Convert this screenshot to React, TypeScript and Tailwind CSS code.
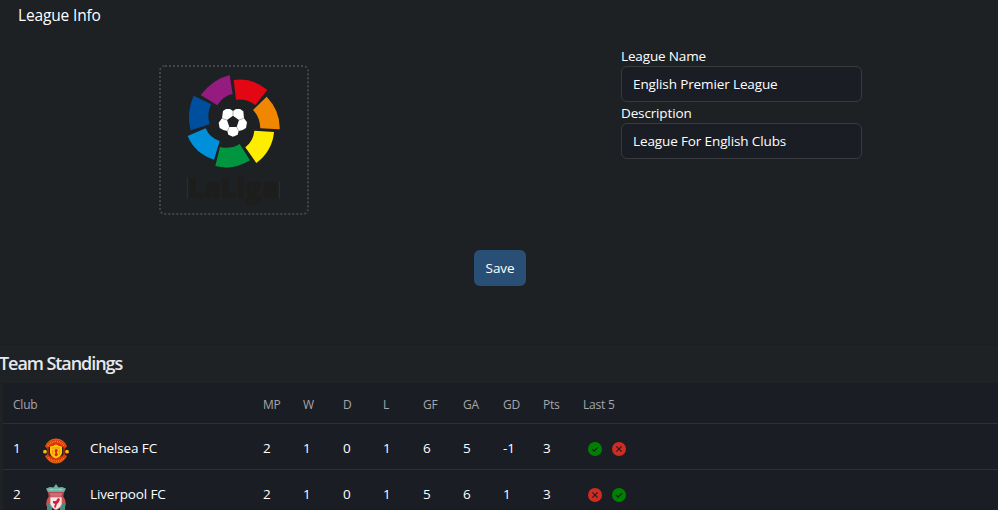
import React from "react";

const segments = [
  { fill: "#951b81", d: "M152 120 Q190 72 239 60 L248 117 Q220 122 202 151 Z" },
  { fill: "#e30613", d: "M251 75 Q306 66 352 105 L316 150 Q292 130 258 134 Z" },
  { fill: "#f18700", d: "M350 125 Q391 168 389 223 L331 220 Q330 187 309 165 Z" },
  { fill: "#ffed00", d: "M372 231 Q367 288 319 324 L286 277 Q310 258 313 227 Z" },
  { fill: "#009640", d: "M300 316 Q250 347 196 333 L210 276 Q241 284 269 267 Z" },
  { fill: "#0090d9", d: "M192 314 Q134 295 113 243 L167 220 Q178 248 209 258 Z" },
  { fill: "#004f9f", d: "M122 226 Q108 173 131 122 L183 148 Q169 178 179 208 Z" },
];

function LeagueLogo() {
  return (
    <svg viewBox="33 36 438 438" className="block h-full w-full">
      {segments.map((s) => (
        <path key={s.fill} d={s.d} fill={s.fill} />
      ))}
      <g fill="#fff">
        <path d="M219 168 L228 162 H240 L249 168 L258 162 H270 L280 169 L282 190 L291 202 L288 219 L278 225 L266 228 L263 239 L249 245 L235 239 L232 228 L220 225 L209 219 L206 203 L216 190 Z" />
      </g>
      <path d="M249 182 L267 195 L260 216 H238 L231 195 Z" fill="#1d2124" />
      <path d="M249 168 V182 M267 195 L281 190 M260 216 L266 228 M238 216 L232 228 M231 195 L216 190" stroke="#8c8e90" strokeWidth="2" />
      <text x="114" y="430" textLength="272" lengthAdjust="spacingAndGlyphs" fill="#1d1d1b" stroke="#1d1d1b" strokeWidth="2" className="font-['Open_Sans',sans-serif] text-[82px] font-extrabold">
        LaLiga
      </text>
      <path d="M112 368 V431 M389 380 V431" stroke="#34383a" strokeWidth="2" />
    </svg>
  );
}

function UnitedCrest() {
  return (
    <svg viewBox="0 0 26 26" className="block size-[26px]">
      <path d="M2 8.5 Q5 .8 13 .5 Q21 .8 24 8.5 L21.5 11 V16 L24 18 Q20 25.3 13 25.5 Q6 25.3 2 18 L4.5 16 V11 Z" fill="#e03010" />
      <path d="M2.8 8.5 Q5 1.5 13 1.2 Q21 1.5 23.2 8.5 M2.8 18 Q6 24.7 13 24.9 Q20 24.7 23.2 18" fill="none" stroke="#c98a10" strokeWidth=".7" />
      <path d="M4.8 8 Q8 3.5 13 3.3 Q18 3.5 21.2 8" fill="none" stroke="#f58a1a" strokeWidth="1.7" strokeDasharray="1 .8" />
      <path d="M5 19.5 Q8 22.8 13 23 Q18 22.8 21 19.5" fill="none" stroke="#f5841a" strokeWidth="1.7" strokeDasharray="1 .8" />
      <path d="M5.500 9.500 Q13 4.500 20.500 9.500 V17 Q13 22 5.500 17 Z" fill="#33201b" />
      <circle cx="2" cy="13.7" r="1.9" fill="#f4b80e" />
      <circle cx="24" cy="13.7" r="1.9" fill="#f4b80e" />
      <path d="M7 8.500 L10 7.800 L13 6.500 L16 7.800 L19 8.500 V15 Q18 19 13 20.500 Q8 19 7 15 Z" fill="#ffc800" />
      <path d="M9 10 H17 M9.7 12 V16.5 M16.3 12 V16.5" stroke="#ee811a" />
      <path d="M11.5 12 L13 11 L15 12 L13.8 14 L15 17 L13 18.5 L11.5 17 L12.4 15 Z" fill="#d32412" />
    </svg>
  );
}

function LiverpoolCrest() {
  return (
    <svg viewBox="0 0 26 34" className="block h-[34px] w-[26px]">
      <path d="M3 4.5 L7 3 L10.5 3.5 L13 0 L15.5 3.5 L19 3 L23 4.5 L21 8.5 H5 Z" fill="#68b3a3" />
      <path d="M6 5.5 H20 M9 4 V7 M17 4 V7" stroke="#a8d2c7" strokeWidth=".7" />
      <path d="M5 8 H21 L20 15 H6 Z" fill="#ba4654" />
      <path d="M7 10 H19 M8 12 H18" stroke="#dfa6ab" strokeWidth=".8" />
      <path d="M5.5 13 Q2.5 17 3.5 22 H7 L8 14 Z M20.5 13 Q23.5 17 22.5 22 H19 L18 14 Z" fill="#ce5246" />
      <path d="M4 20 H9 V29 H4 Z M17 20 H22 V29 H17 Z" fill="#438f80" />
      <path d="M7 13 H19 V20 Q18 24 13 26 Q8 24 7 20 Z" fill="#f5e7e8" stroke="#c55b65" strokeWidth=".7" />
      <path d="M10 17 L13 17 L15 14 L17 15 L16 18 L14 20 L12.5 24 L11 23 L12 20 L10 19 Z" fill="#cf2436" />
      <path d="M7 26 H19 V32 H7 Z" fill="#5aab98" />
    </svg>
  );
}

function Result({ win }: { win: boolean }) {
  return (
    <svg viewBox="0 0 14 14" className="block size-[14px]">
      <circle cx="7" cy="7" r="7" fill={win ? "#008000" : "#d02c23"} />
      <path d={win ? "M4 7.1 L6.2 9.2 L10 5.1" : "M4.3 4.3 L9.7 9.7 M9.7 4.3 L4.3 9.7"} fill="none" stroke="#1b1d25" strokeWidth="1.1" />
    </svg>
  );
}

const columns = ["MP", "W", "D", "L", "GF", "GA", "GD", "Pts"];
const teams = [
  { name: "Chelsea FC", crest: <UnitedCrest />, stats: [2, 1, 0, 1, 6, 5, -1, 3], last: [true, false] },
  { name: "Liverpool FC", crest: <LiverpoolCrest />, stats: [2, 1, 0, 1, 5, 6, 1, 3], last: [false, true] },
];

function Field({ label, value }: { label: string; value: string }) {
  return (
    <label className="block h-[57px]">
      <span className="block h-[19px] text-[13.5px] leading-[19px] tracking-[-0.14px]">{label}</span>
      <input readOnly value={value} className="block h-9 w-[241px] rounded-md border border-[#373a3e] bg-[#1b1d25] px-[11px] text-[13.5px] tracking-[-0.12px] outline-none" />
    </label>
  );
}

export default function App() {
  return (
    <main className="h-[510px] w-[998px] overflow-hidden bg-[#1e2224] font-['Open_Sans','Noto_Sans',sans-serif] text-white">
      <section className="h-[345px] border-b border-[#1c1f22] bg-[#1d2124]">
        <h1 className="h-[47px] pt-1 pl-[18px] text-[15.5px] leading-[23px] tracking-[-0.15px]">League Info</h1>
        <div className="flex h-[203px]">
          <div className="w-[621px] pt-[18px] pl-[159px]">
            <div className="size-[150px] rounded-md border-2 border-dotted border-[#42464a]">
              <LeagueLogo />
            </div>
          </div>
          <div>
            <Field label="League Name" value="English Premier League" />
            <Field label="Description" value="League For English Clubs" />
          </div>
        </div>
        <button className="ml-[474px] block h-9 w-[52px] rounded-md bg-[#2a4f77] text-[13.5px] tracking-[-0.1px]">Save</button>
      </section>
      <h2 className="-ml-px h-[38px] text-[18px] leading-[36px] font-semibold tracking-[-1.07px] text-[#e6e8ee]">Team Standings</h2>
      <section className="ml-[3px] bg-[#1b1d25]">
        <div className="flex h-[41px] items-center border-b border-[#2c2f37] pt-1 text-[12px] tracking-[-0.2px] text-[#a5a6a9]">
          <span className="w-[260px] pl-[10px]">Club</span>
          {columns.map((c) => (
            <span key={c} className="w-10">{c}</span>
          ))}
          <span>Last 5</span>
        </div>
        {teams.map((team, i) => (
          <div key={team.name} className="flex h-[46px] border-b border-[#2c2f37] text-[13.5px] leading-[49px] tracking-[-0.12px]">
            <span className="w-10 pl-[10px]">{i + 1}</span>
            <span className="w-[47px] pt-[14px]">{team.crest}</span>
            <span className="w-[173px]">{team.name}</span>
            {team.stats.map((n, k) => (
              <span key={k} className="w-10">{n}</span>
            ))}
            <span className="flex gap-[10px] pt-[18px] pl-[5px]">
              {team.last.map((win, k) => (
                <Result key={k} win={win} />
              ))}
            </span>
          </div>
        ))}
      </section>
    </main>
  );
}
